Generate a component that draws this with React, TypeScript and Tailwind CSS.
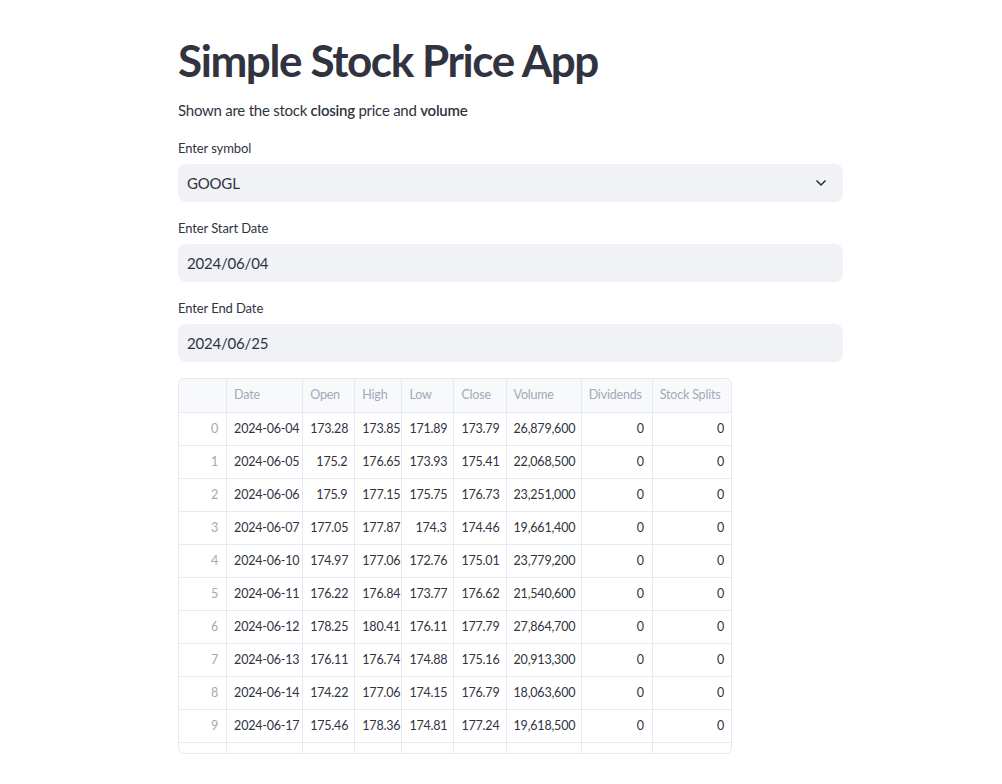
import { ChevronDown } from "lucide-react";

const rows = [
  ["2024-06-04", "173.28", "173.85", "171.89", "173.79", "26,879,600"],
  ["2024-06-05", "175.2", "176.65", "173.93", "175.41", "22,068,500"],
  ["2024-06-06", "175.9", "177.15", "175.75", "176.73", "23,251,000"],
  ["2024-06-07", "177.05", "177.87", "174.3", "174.46", "19,661,400"],
  ["2024-06-10", "174.97", "177.06", "172.76", "175.01", "23,779,200"],
  ["2024-06-11", "176.22", "176.84", "173.77", "176.62", "21,540,600"],
  ["2024-06-12", "178.25", "180.41", "176.11", "177.79", "27,864,700"],
  ["2024-06-13", "176.11", "176.74", "174.88", "175.16", "20,913,300"],
  ["2024-06-14", "174.22", "177.06", "174.15", "176.79", "18,063,600"],
  ["2024-06-17", "175.46", "178.36", "174.81", "177.24", "19,618,500"],
  ["2024-06-18", "177.14", "177.49", "174.04", "175.09", "23,430,000"],
];

const cols = [
  { name: "", w: "w-[48px]" },
  { name: "Date", w: "w-[76px]" },
  { name: "Open", w: "w-[52px]" },
  { name: "High", w: "w-[47px]" },
  { name: "Low", w: "w-[52px]" },
  { name: "Close", w: "w-[52px]" },
  { name: "Volume", w: "w-[75px]" },
  { name: "Dividends", w: "w-[71px]" },
  { name: "Stock Splits", w: "w-[80px]" },
];

const Field = ({ label, value, select }: { label: string; value: string; select?: boolean }) => (
  <div className="mb-[16px]">
    <div className="text-[13px] leading-[20px] tracking-[-0.1px] text-[#31333f] mb-[6px]">{label}</div>
    <div className="h-[38px] rounded-[8px] bg-[#f0f2f6] flex items-center justify-between pl-[9px] pr-[14px] text-[15px] tracking-[-0.2px] text-[#31333f]">
      <span>{value}</span>
      {select && <ChevronDown size={16} strokeWidth={2.5} className="text-[#31333f]" />}
    </div>
  </div>
);

export default function App() {
  return (
    <div className="min-h-screen bg-white font-['Source_Sans_Pro','Lato','Noto_Sans',sans-serif] text-[#31333f]">
      <div className="w-[665px] ml-[178px] pt-[32px]">
        <h1 className="text-[44px] leading-[56px] font-bold tracking-[-1.4px] mb-[10px]">Simple Stock Price App</h1>
        <p className="text-[15px] leading-[24px] tracking-[-0.25px] mb-[16px]">
          Shown are the stock <b className="font-semibold">closing</b> price and <b className="font-semibold">volume</b>
        </p>
        <Field label="Enter symbol" value="GOOGL" select />
        <Field label="Enter Start Date" value="2024/06/04" />
        <Field label="Enter End Date" value="2024/06/25" />
        <div className="w-[554px] h-[376px] overflow-hidden rounded-[6px] border border-[#e6e9ef]">
          <table className="w-[555px] table-fixed border-collapse text-[12.5px] tracking-[-0.2px] whitespace-nowrap -ml-px -mt-px">
            <thead>
              <tr className="h-[34px] bg-[#f8f9fb]">
                {cols.map((c, i) => (
                  <th key={i} className={`${c.w} border border-[#e6e9ef] px-[7px] text-left font-normal text-[#a3a8b8]`}>
                    {c.name}
                  </th>
                ))}
              </tr>
            </thead>
            <tbody>
              {rows.map((r, i) => (
                <tr key={i} className="h-[33px]">
                  <td className="border border-[#e6e9ef] px-[8px] text-right text-[#a3a8b8]">{i}</td>
                  <td className="border border-[#e6e9ef] px-[7px] text-left">{r[0]}</td>
                  {r.slice(1).map((v, j) => (
                    <td key={j} className="border border-[#e6e9ef] px-[7px] text-right">{v}</td>
                  ))}
                  <td className="border border-[#e6e9ef] px-[8px] text-right">0</td>
                  <td className="border border-[#e6e9ef] px-[8px] text-right">0</td>
                </tr>
              ))}
            </tbody>
          </table>
        </div>
      </div>
    </div>
  );
}
